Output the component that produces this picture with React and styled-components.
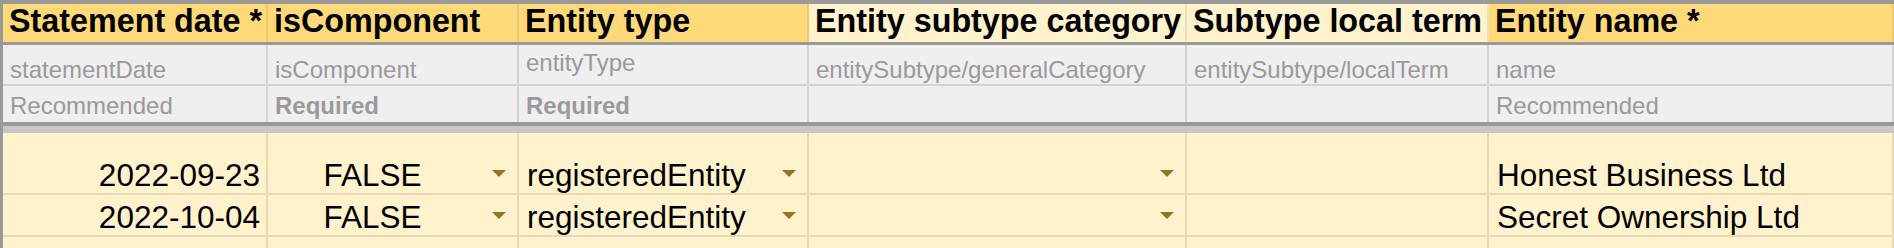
import React from "react";
import styled, { createGlobalStyle } from "styled-components";

const GlobalStyle = createGlobalStyle`
  html, body {
    margin: 0;
    padding: 0;
    background: #fff2cc;
    overflow: hidden;
  }
  body {
    font-family: "Liberation Sans", Arial, sans-serif;
  }
`;

// widths include the 2px right border of each cell
const COLUMNS = "265px 251px 290px 378px 302px 1fr";

const Sheet = styled.div`
  width: 1894px;
  border-top: 4px solid #999999;
  border-left: 3px solid #999999;
  box-sizing: border-box;
`;

const Row = styled.div`
  display: grid;
  grid-template-columns: ${COLUMNS};
  height: ${(p) => p.$height}px;
  border-bottom: ${(p) => p.$border};
  box-sizing: content-box;
`;

const FrozenBand = styled.div`
  height: 7px;
  background: #c8c8c8;
`;

const HeaderCell = styled.div`
  display: flex;
  align-items: flex-end;
  padding: 0 6px 5px 6px;
  background: ${(p) => (p.$light ? "#fff2cc" : "#fdd97a")};
  border-right: 2px solid ${(p) => (p.$light ? "#eee0b6" : "#ecc96c")};
  font-size: 32.3px;
  font-weight: 700;
  line-height: 32px;
  color: #000;
  white-space: nowrap;
  overflow: hidden;
  box-sizing: border-box;
`;

const MetaCell = styled.div`
  display: flex;
  align-items: ${(p) => (p.$top ? "flex-start" : "flex-end")};
  padding: ${(p) => (p.$top ? "5px 7px 0" : `0 7px ${p.$pb ?? 1}px`)};
  background: #efefef;
  border-right: 2px solid #d4d4d4;
  font-size: 24px;
  font-weight: ${(p) => (p.$bold ? 700 : 400)};
  line-height: 26px;
  color: #9a9a9a;
  white-space: nowrap;
  overflow: hidden;
  box-sizing: border-box;
`;

const DataCell = styled.div`
  display: flex;
  align-items: flex-end;
  justify-content: ${(p) => (p.$right ? "flex-end" : "flex-start")};
  padding: 0 6px 0 8px;
  background: #fff2cc;
  border-right: 2px solid #e6d9b4;
  font-size: 31.5px;
  line-height: 36px;
  color: #000;
  white-space: nowrap;
  overflow: hidden;
  box-sizing: border-box;
`;

const DropValue = styled.span`
  flex: 1;
  text-align: ${(p) => (p.$center ? "center" : "left")};
`;

const Arrow = styled.span`
  flex: none;
  width: 0;
  height: 0;
  margin: 0 5px 16px ${(p) => p.$gap}px;
  border-left: 7px solid transparent;
  border-right: 7px solid transparent;
  border-top: 7px solid #947422;
`;

const dataRows = [
  { date: "2022-09-23", comp: "FALSE", type: "registeredEntity", name: "Honest Business Ltd", height: 60 },
  { date: "2022-10-04", comp: "FALSE", type: "registeredEntity", name: "Secret Ownership Ltd", height: 40 },
  { date: "", comp: "", type: "", name: "", height: 20, empty: true },
];

const DropCell = ({ value, center, gap }) => (
  <DataCell>
    <DropValue $center={center}>{value}</DropValue>
    <Arrow $gap={gap} />
  </DataCell>
);

const App = () => {
  return (
    <>
      <GlobalStyle />
      <Sheet>
        <Row $height={38} $border="3px solid #999999">
          <HeaderCell>Statement date *</HeaderCell>
          <HeaderCell>isComponent</HeaderCell>
          <HeaderCell>Entity type</HeaderCell>
          <HeaderCell $light>Entity subtype category</HeaderCell>
          <HeaderCell $light>Subtype local term</HeaderCell>
          <HeaderCell>Entity name *</HeaderCell>
        </Row>
        <Row $height={39} $border="2px solid #d4d4d4">
          <MetaCell>statementDate</MetaCell>
          <MetaCell>isComponent</MetaCell>
          <MetaCell $top>entityType</MetaCell>
          <MetaCell>entitySubtype/generalCategory</MetaCell>
          <MetaCell>entitySubtype/localTerm</MetaCell>
          <MetaCell>name</MetaCell>
        </Row>
        <Row $height={36} $border="4px solid #999999">
          <MetaCell $pb={3}>Recommended</MetaCell>
          <MetaCell $pb={3} $bold>Required</MetaCell>
          <MetaCell $pb={3} $bold>Required</MetaCell>
          <MetaCell />
          <MetaCell />
          <MetaCell $pb={3}>Recommended</MetaCell>
        </Row>
        <FrozenBand />
        {dataRows.map((r, i) => (
          <Row key={i} $height={r.height} $border="2px solid #e6d9b4">
            <DataCell $right>{r.date}</DataCell>
            {r.empty ? <DataCell /> : <DropCell value={r.comp} center gap={23} />}
            {r.empty ? <DataCell /> : <DropCell value={r.type} gap={8} />}
            {r.empty ? <DataCell /> : <DropCell value="" gap={0} />}
            <DataCell />
            <DataCell>{r.name}</DataCell>
          </Row>
        ))}
      </Sheet>
    </>
  );
};

export default App;
